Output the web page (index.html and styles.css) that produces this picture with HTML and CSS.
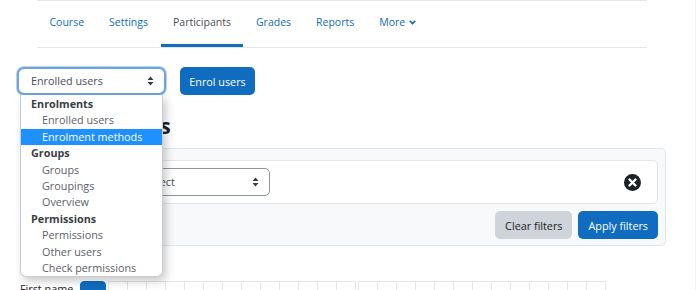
FILE: index.html
```html
<!doctype html>
<html>
<head>
    <title>Participants</title>
    <link rel="stylesheet" href="styles.css">
</head>
<body>
<div class="page">
<nav class="secnav">
<ul>
<li><a href="#">Course</a></li>
<li><a href="#">Settings</a></li>
<li><a href="#" class="active">Participants</a></li>
<li><a href="#">Grades</a></li>
<li><a href="#">Reports</a></li>
<li><a href="#">More <svg class="chev" width="7" height="5" viewBox="0 0 7 5"><path d="M0.8 0.9 L3.5 3.6 L6.2 0.9" fill="none" stroke="#0f6cbf" stroke-width="1.6"/></svg></a></li>
</ul>
</nav>

<div class="main">
    <div class="tertiary">
        <div class="jump">
            <div class="select focused">Enrolled users
                <svg class="sort" width="7" height="10" viewBox="0 0 7 10"><path d="M3.5 0.5 L6.5 4 L0.5 4 Z M3.5 9.5 L6.5 6 L0.5 6 Z" fill="#343a40"/></svg>
            </div>
            <ul class="listbox">
                <li class="grp">Enrolments</li>
                <li>Enrolled users</li>
                <li class="sel">Enrolment methods</li>
                <li class="grp">Groups</li>
                <li>Groups</li>
                <li>Groupings</li>
                <li>Overview</li>
                <li class="grp">Permissions</li>
                <li>Permissions</li>
                <li>Other users</li>
                <li>Check permissions</li>
            </ul>
        </div>
        <button class="btn primary enrol">Enrol users</button>
    </div>

    <h2 class="heading">Enrolled users</h2>

    <div class="filters">
        <div class="filterrow">
            <span class="match">Match</span>
            <div class="select small">Select
                <svg class="sort" width="7" height="10" viewBox="0 0 7 10"><path d="M3.5 0.5 L6.5 4 L0.5 4 Z M3.5 9.5 L6.5 6 L0.5 6 Z" fill="#343a40"/></svg>
            </div>
            <svg class="remove" width="17" height="17" viewBox="0 0 17 17"><circle cx="8.5" cy="8.5" r="8.5" fill="#1d2125"/><path d="M5.5 5.5 L11.5 11.5 M11.5 5.5 L5.5 11.5" stroke="#fff" stroke-width="2.4" stroke-linecap="round"/></svg>
        </div>
        <div class="filteractions">
            <button class="btn secondary">Clear filters</button>
            <button class="btn primary">Apply filters</button>
        </div>
    </div>

    <div class="initials">
        <span class="ilabel">First name</span>
        <span class="letter all">All</span>
        <div class="group" id="g1"></div>
        <div class="group" id="g2"></div>
    </div>
</div>
</div>
<script>
    let letters='ABCDEFGHIJKLMNOPQRSTUVWXYZ';
    let html1='', html2='';
    for(let i=0;i<letters.length;i++){
        let temp=`<span class="letter">${letters[i]}</span>`;
        if(i<13) html1+=temp; else html2+=temp;
    }
    document.getElementById('g1').innerHTML=html1;
    document.getElementById('g2').innerHTML=html2;
</script>
</body>
</html>
```

FILE: styles.css
```css
body{
    margin: 0;
    font-family: "Open Sans", "Noto Sans", sans-serif;
    font-size: 10.8px;
    color: #1d2125;
    background: #fff;
}
.page{
    width: 695px;
    height: 290px;
    overflow: hidden;
    border-right: 1px solid #eef0f2;
}
.secnav{
    margin: 0 48px 0 37px;
}
.secnav ul{
    display: flex;
    margin: 0;
    padding: 0;
    list-style: none;
    border-top: 1px solid #e3e6e9;
    border-bottom: 1px solid #e3e6e9;
}
.secnav li a{
    display: block;
    padding: 0 12.5px;
    line-height: 43px;
    font-size: 10.5px;
    border-bottom: 3px solid transparent;
    color: #0f6cbf;
    text-decoration: none;
}
.secnav li a.active{
    color: #495057;
    border-bottom-color: #0f6cbf;
}
.chev{
    margin-left: 1px;
    vertical-align: 1px;
}
.main{
    padding: 19px 29px 0 17px;
}
.tertiary{
    display: flex;
    align-items: center;
    gap: 14px;
}
.jump{
    position: relative;
}
.select{
    position: relative;
    box-sizing: border-box;
    height: 28px;
    line-height: 26px;
    border: 1px solid #8f959e;
    border-radius: 5px;
    padding-left: 12px;
    color: #495057;
    background: #fff;
}
.select.focused{
    width: 149px;
    border: 2px solid #6ea4dc;
    border-radius: 7px;
    line-height: 24px;
    box-shadow: 0 0 0 1px #b9d3ee;
}
.sort{
    position: absolute;
    right: 10px;
    top: 50%;
    margin-top: -5px;
}
.listbox{
    position: absolute;
    left: 3px;
    top: 28px;
    width: 143px;
    margin: 0;
    padding: 1px 0 0;
    list-style: none;
    background: #fff;
    border: 1px solid #c9cdd1;
    border-top: none;
    border-radius: 0 0 6px 6px;
    box-shadow: 3px 4px 10px rgba(0,0,0,.22);
    z-index: 5;
    box-sizing: border-box;
    height: 182px;
}
.listbox li{
    height: 16.4px;
    line-height: 16.4px;
    padding-left: 21px;
    color: #5b6167;
    white-space: nowrap;
}
.listbox li.grp{
    padding-left: 10px;
    font-weight: bold;
    color: #3a3f44;
}
.listbox li.sel{
    background: #1e90ff;
    color: #fff;
}
.btn{
    box-sizing: border-box;
    height: 28px;
    padding: 0 10px;
    border: none;
    border-radius: 5px;
    font-family: "Open Sans", "Noto Sans", sans-serif;
    font-size: 10.8px;
}
.primary{
    background: #0f6cbf;
    color: #fff;
}
.secondary{
    background: #ced4da;
    color: #1d2125;
}
.enrol{
    width: 75px;
    padding: 0;
}
.heading{
    margin: 16px 0 0 5px;
    height: 37px;
    font-size: 21px;
    line-height: 30px;
    font-weight: bold;
}
.filters{
    margin-left: 4px;
    box-sizing: border-box;
    height: 98px;
    background: #f8f9fa;
    border: 1px solid #e3e6e9;
    border-radius: 5px;
    padding: 11px 7px 6px 7px;
}
.filterrow{
    display: flex;
    align-items: center;
    box-sizing: border-box;
    height: 44px;
    background: #fff;
    border: 1px solid #e3e6e9;
    border-radius: 5px;
    padding: 0 16px 0 12px;
}
.match{
    width: 85px;
    color: #1d2125;
}
.select.small{
    width: 143px;
    padding-left: 17px;
}
.remove{
    margin-left: auto;
}
.filteractions{
    display: flex;
    justify-content: flex-end;
    gap: 6px;
    margin-top: 7px;
}
.initials{
    display: flex;
    align-items: flex-start;
    margin-top: 35px;
    margin-left: 3px;
}
.ilabel{
    margin-top: 0;
    width: 60px;
    color: #1d2125;
}
.letter{
    box-sizing: border-box;
    height: 28px;
    width: 20px;
    line-height: 26px;
    text-align: center;
    border: 1px solid #e3e6e9;
    margin-left: -1px;
    color: #0f6cbf;
}
.letter.all{
    width: 26px;
    margin-left: 0;
    margin-right: 3px;
    background: #0f6cbf;
    border-color: #0f6cbf;
    border-radius: 4px;
    color: #fff;
}
.group{
    display: flex;
    margin-right: 3px;
}
```
